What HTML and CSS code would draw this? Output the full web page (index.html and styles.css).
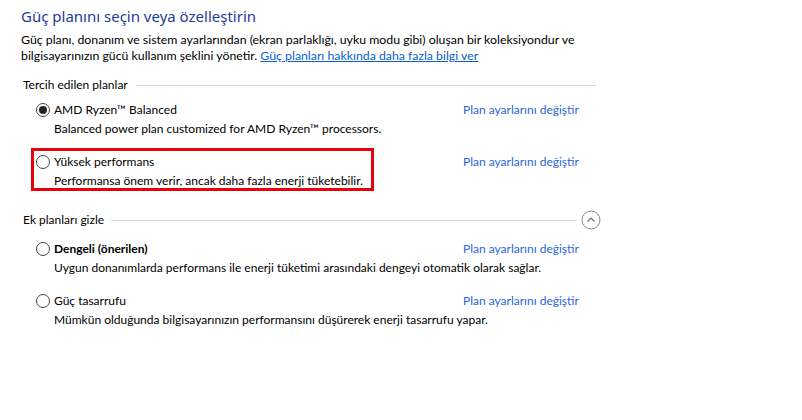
FILE: index.html
```html
<!doctype html>
<html>
  <head>
    <meta charset="utf-8">
    <title>Güç Seçenekleri</title>
    <link rel="stylesheet" href="styles.css">
  </head>
  <body>
    <div class="page">
      <h1 class="title">Güç planını seçin veya özelleştirin</h1>
      <p class="intro">Güç planı, donanım ve sistem ayarlarından (ekran parlaklığı, uyku modu gibi) oluşan bir koleksiyondur ve<br>
        bilgisayarınızın gücü kullanım şeklini yönetir. <a href="#">Güç planları hakkında daha fazla bilgi ver</a></p>

      <div class="group">
        <div class="group-head">
          <span>Tercih edilen planlar</span>
          <span class="rule"></span>
        </div>
        <div class="plan">
          <div class="plan-main">
            <div class="plan-name"><span class="radio checked"></span>AMD Ryzen™ Balanced</div>
            <div class="plan-desc">Balanced power plan customized for AMD Ryzen™ processors.</div>
          </div>
          <a class="plan-link" href="#">Plan ayarlarını değiştir</a>
        </div>
        <div class="plan">
          <div class="plan-main marked">
            <div class="plan-name"><span class="radio"></span>Yüksek performans</div>
            <div class="plan-desc">Performansa önem verir, ancak daha fazla enerji tüketebilir.</div>
          </div>
          <a class="plan-link" href="#">Plan ayarlarını değiştir</a>
        </div>
      </div>

      <div class="group extra">
        <div class="group-head collapsible">
          <span>Ek planları gizle</span>
          <span class="rule"></span>
          <svg class="toggle" width="20" height="20" viewBox="0 0 20 20">
            <circle cx="10" cy="10" r="9" fill="none" stroke="#8a8a8a" stroke-width="1"/>
            <polyline points="6.5,11.5 10,8 13.5,11.5" fill="none" stroke="#6a6a6a" stroke-width="1.2"/>
          </svg>
        </div>
        <div class="plan">
          <div class="plan-main">
            <div class="plan-name"><span class="radio"></span><b>Dengeli (önerilen)</b></div>
            <div class="plan-desc">Uygun donanımlarda performans ile enerji tüketimi arasındaki dengeyi otomatik olarak sağlar.</div>
          </div>
          <a class="plan-link" href="#">Plan ayarlarını değiştir</a>
        </div>
        <div class="plan">
          <div class="plan-main">
            <div class="plan-name"><span class="radio"></span>Güç tasarrufu</div>
            <div class="plan-desc">Mümkün olduğunda bilgisayarınızın performansını düşürerek enerji tasarrufu yapar.</div>
          </div>
          <a class="plan-link" href="#">Plan ayarlarını değiştir</a>
        </div>
      </div>
    </div>
  </body>
</html>
```

FILE: styles.css
```css
body { margin: 0; background: #fff; color: #000; font-family: Lato, "Noto Sans", sans-serif; font-size: 12px; }
.page { padding: 6px 0 0 21px; }
.title { margin: 0; font-family: "Noto Sans", sans-serif; font-size: 15px; font-weight: normal; line-height: 20px; color: #1e3b9a; }
.intro { margin: 6px 0 0 0; font-size: 12.3px; line-height: 16px; }
.intro a { color: #0a5fd0; }

.group { margin-left: 2px; width: 573px; }
.group + .group { margin-top: 20px; }
.group:first-of-type { margin-top: 11px; }
.group-head { display: flex; align-items: center; height: 19px; line-height: 19px; margin-bottom: 6px; }
.group-head .rule { flex: 1; border-top: 1px solid #d4d4d4; margin-left: 8px; margin-top: 1px; }
.group-head.collapsible { margin-right: -5px; margin-bottom: 10px; }
.group-head.collapsible .rule { margin-left: 7px; }
.toggle { margin-left: 4px; flex: none; }

.plan { display: grid; grid-template-columns: 427px auto; padding-left: 13px; margin-bottom: 14px; line-height: 19px; }
.plan-main { position: relative; white-space: nowrap; }
.plan-name { display: flex; align-items: center; gap: 4px; }
.plan-name b { font-weight: bold; }
.plan-desc { padding-left: 18px; }
.plan-link { color: #2a66d9; text-decoration: none; align-self: start; }

.radio { width: 12px; height: 12px; border: 1px solid #444; border-radius: 50%; box-sizing: content-box; display: inline-flex; align-items: center; justify-content: center; flex: none; }
.radio.checked::before { content: ""; width: 8px; height: 8px; border-radius: 50%; background: #222; }

/* annotation box drawn over the highlighted plan */
.plan-main.marked::after { content: ""; position: absolute; left: -5px; top: -4px; width: 343px; height: 43px; border: 3px solid #e8000b; box-sizing: border-box; }
```
